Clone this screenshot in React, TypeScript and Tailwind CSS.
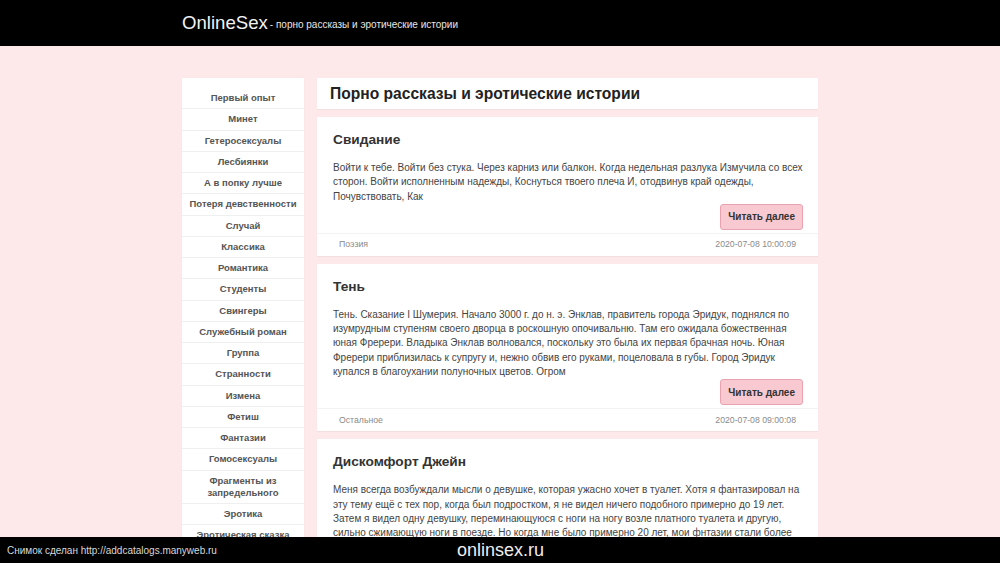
import React from "react";

const cats: string[] = [
  "Первый опыт",
  "Минет",
  "Гетеросексуалы",
  "Лесбиянки",
  "А в попку лучше",
  "Потеря девственности",
  "Случай",
  "Классика",
  "Романтика",
  "Студенты",
  "Свингеры",
  "Служебный роман",
  "Группа",
  "Странности",
  "Измена",
  "Фетиш",
  "Фантазии",
  "Гомосексуалы",
  "Фрагменты из запредельного",
  "Эротика",
  "Эротическая сказка",
  "Юмор",
  "Инцест",
];

const posts = [
  {
    title: "Свидание",
    text: "Войти к тебе. Войти без стука. Через карниз или балкон. Когда недельная разлука Измучила со всех сторон. Войти исполненным надежды, Коснуться твоего плеча И, отодвинув край одежды, Почувствовать, Как",
    cat: "Поэзия",
    date: "2020-07-08 10:00:09",
  },
  {
    title: "Тень",
    text: "Тень. Сказание I Шумерия. Начало 3000 г. до н. э. Энклав, правитель города Эридук, поднялся по изумрудным ступеням своего дворца в роскошную опочивальню. Там его ожидала божественная юная Фререри. Владыка Энклав волновался, поскольку это была их первая брачная ночь. Юная Фререри приблизилась к супругу и, нежно обвив его руками, поцеловала в губы. Город Эридук купался в благоухании полуночных цветов. Огром",
    cat: "Остальное",
    date: "2020-07-08 09:00:08",
  },
  {
    title: "Дискомфорт Джейн",
    text: "Меня всегда возбуждали мысли о девушке, которая ужасно хочет в туалет. Хотя я фантазировал на эту тему ещё с тех пор, когда был подростком, я не видел ничего подобного примерно до 19 лет. Затем я видел одну девушку, переминающуюся с ноги на ногу возле платного туалета и другую, сильно сжимающую ноги в поезде. Но когда мне было примерно 20 лет, мои фнтазии стали более конкретными и я начал думать о том, как",
    cat: "Фетиш",
    date: "2020-07-08 08:00:07",
  },
];

export default function App() {
  return (
    <div
      className="min-h-screen bg-[#fde8ea] text-[#333]"
      style={{ fontFamily: '"Liberation Sans", Arial, sans-serif' }}
    >
      <header className="h-[46px] bg-black">
        <div className="mx-auto flex h-full w-[636px] items-center">
          <span className="text-[18.6px] leading-none text-[#f2f2f2]">OnlineSex</span>
          <span className="ml-[2px] mt-[3px] text-[10px] leading-none text-[#e6e6e6]">
            - порно рассказы и эротические истории
          </span>
        </div>
      </header>

      <div className="mx-auto mt-[32px] flex w-[636px] items-start gap-[13px]">
        <aside className="w-[122px] shrink-0 bg-white pt-[10px] shadow-[0_0_1px_rgba(0,0,0,0.06)]">
          {cats.map((c) => (
            <div
              key={c}
              className="border-b border-[#efefef] px-[4px] py-[4px] text-center text-[9.5px] font-bold leading-[12.25px] text-[#555]"
            >
              {c}
            </div>
          ))}
        </aside>

        <main className="flex w-[501px] flex-col gap-[8px]">
          <div className="flex h-[31px] items-center bg-white px-[13px] shadow-[0_1px_1px_rgba(0,0,0,0.04)]">
            <h1 className="text-[15.6px] font-bold leading-none text-[#222]">
              Порно рассказы и эротические истории
            </h1>
          </div>

          {posts.map((p) => (
            <article key={p.title} className="bg-white shadow-[0_1px_1px_rgba(0,0,0,0.04)]">
              <div className="pl-[16px] pr-[15px] pt-[14px] pb-[3px]">
                <h2 className="text-[13.7px] font-bold leading-[17px] text-[#333]">{p.title}</h2>
                <p className="mt-[13px] text-[10px] leading-[14.3px] text-[#444]">{p.text}</p>
                <div className="flex justify-end">
                  <button className="h-[26px] rounded-[3px] border border-[#e9a3b0] bg-[#f9c9d1] px-[7px] text-[10px] font-bold text-[#333]">
                    Читать далее
                  </button>
                </div>
              </div>
              <div className="flex h-[23px] items-center justify-between border-t border-[#f3f3f3] px-[22px] text-[8.7px] text-[#8a8a8a]">
                <span>{p.cat}</span>
                <span>{p.date}</span>
              </div>
            </article>
          ))}
        </main>
      </div>

      <div className="fixed bottom-0 left-0 right-0 flex h-[26px] items-center bg-black">
        <span className="ml-[7px] text-[10px] text-[#d8d8d8]">Снимок сделан http://addcatalogs.manyweb.ru</span>
        <span className="ml-[240px] text-[18px] leading-none text-[#eeeeee]">onlinsex.ru</span>
      </div>
    </div>
  );
}
